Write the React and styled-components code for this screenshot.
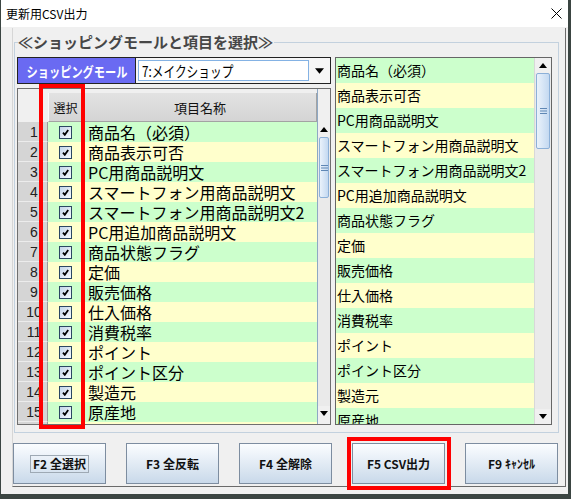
import React from 'react';
import styled, { createGlobalStyle } from 'styled-components';

const FONT = `"Noto Sans CJK JP", "Noto Sans", sans-serif`;

const Global = createGlobalStyle`
  html, body { margin: 0; padding: 0; }
  body {
    width: 571px; height: 499px; overflow: hidden;
    background: #3b4542;
    font-family: ${FONT};
  }
`;

const Window = styled.div`
  margin-left: 1px;
  width: 567px;
  height: 494px;
  display: flex;
  flex-direction: column;
  background: #f0f0f0;
`;

const TitleBar = styled.div`
  flex: none;
  height: 27px;
  background: #fff;
  display: flex;
  align-items: center;
  justify-content: space-between;
  padding: 0 6px 0 5px;
  box-sizing: border-box;
`;

const Title = styled.span`
  font-size: 12px;
  line-height: 14px;
  color: #000;
`;

const Body = styled.div`
  flex: 1;
  padding: 1px 0 0 11px;
  box-sizing: border-box;
`;

const Panel = styled.div`
  width: 554px;
  height: 459px;
  box-sizing: border-box;
  border-left: 1px solid #d6d6d6;
  border-right: 1px solid #6a6a6a;
  border-bottom: 1px solid #6a6a6a;
  padding-top: 14px;
  display: flex;
  flex-direction: column;
`;

const GroupBox = styled.div`
  position: relative;
  margin-left: 1px;
  width: 545px;
  height: 391px;
  box-sizing: border-box;
  border: 1px solid #c3d1de;
  padding: 14px 6px 7px 2px;
  display: flex;
  gap: 4px;
`;

const Legend = styled.div`
  position: absolute;
  top: -9px;
  left: 3px;
  padding: 0 1px 0 0;
  background: #f0f0f0;
  font-size: 15px;
  line-height: 16px;
  font-weight: 700;
  color: #474747;
  white-space: nowrap;
`;

const LeftPane = styled.div`
  position: relative;
  width: 314px;
  display: flex;
  flex-direction: column;
  gap: 4px;
`;

const TopRow = styled.div`
  height: 27px;
  display: flex;
`;

const Squeeze = styled.span`
  display: inline-block;
  white-space: nowrap;
  transform: scaleX(${p => p.$sx});
  transform-origin: ${p => p.$origin || 'center'};
`;

const MallLabel = styled.div`
  width: 118px;
  box-sizing: border-box;
  border: 1px solid #222;
  border-right: none;
  background: #6a6af2;
  color: #fff;
  font-weight: 700;
  font-size: 14px;
  display: flex;
  align-items: center;
  justify-content: center;
  white-space: nowrap;
  overflow: hidden;
`;

const Combo = styled.div`
  flex: 1;
  box-sizing: border-box;
  border: 1px solid #222;
  background: #f6f6f6;
  padding: 2px 0 2px 2px;
  display: flex;
`;

const ComboField = styled.div`
  flex: 1;
  border: 1px solid #84b2e4;
  background: #fff;
  display: flex;
  align-items: center;
  padding-left: 3px;
  font-size: 15px;
  color: #000;
  white-space: nowrap;
  overflow: hidden;
`;

const ComboButton = styled.div`
  width: 21px;
  display: flex;
  align-items: center;
  justify-content: center;
`;

const Grid = styled.div`
  height: 337px;
  box-sizing: border-box;
  border: 1px solid #6f6f6f;
  background: #f0f0f0;
  display: flex;
  overflow: hidden;
`;

const GridTable = styled.div`
  flex: 1;
  display: flex;
  flex-direction: column;
  min-width: 0;
`;

const HeaderRow = styled.div`
  margin-top: 4px;
  height: 29px;
  flex: none;
  display: flex;
`;

const Corner = styled.div`
  width: 30px;
`;

const HeadCell = styled.div`
  width: ${p => (p.$grow ? 'auto' : `${p.$w}px`)};
  flex: ${p => (p.$grow ? 1 : 'none')};
  box-sizing: border-box;
  background: linear-gradient(#e2e2e2, #d4d4d4);
  border-left: 1px solid #fafafa;
  border-right: 1px solid #a3a3a3;
  border-bottom: 1px solid #a3a3a3;
  font-size: ${p => p.$fs}px;
  color: #111;
  display: flex;
  align-items: center;
  justify-content: center;
`;

const Row = styled.div`
  height: 20px;
  flex: none;
  display: flex;
`;

const RowHead = styled.div`
  width: 30px;
  box-sizing: border-box;
  background: #d5d5d5;
  border-bottom: 1px solid #ececec;
  border-right: 1px solid #9a9a9a;
  font-family: "Liberation Sans", sans-serif;
  font-size: 14px;
  color: #222;
  display: flex;
  align-items: center;
  justify-content: center;
  padding-left: 3px;
`;

const CheckCell = styled.div`
  width: 35px;
  background: ${p => p.$bg};
  display: flex;
  align-items: center;
  justify-content: center;
`;

const NameCell = styled.div`
  flex: 1;
  min-width: 0;
  background: ${p => p.$bg};
  padding-left: 5px;
  font-size: 16px;
  line-height: 20px;
  color: #000;
  white-space: nowrap;
  overflow: hidden;
`;

const Box = styled.span`
  width: 13px;
  height: 13px;
  box-sizing: border-box;
  border: 1px solid #2b4663;
  background: linear-gradient(135deg, #c3d5ea, #f7fafd);
  display: flex;
  align-items: center;
  justify-content: center;
`;

const VScroll = styled.div`
  width: ${p => p.$w}px;
  flex: none;
  box-sizing: border-box;
  border-left: 1px solid ${p => p.$line};
  display: flex;
  flex-direction: column;
  background: #eaeaea;
`;

const ScrollSpacer = styled.div`
  height: ${p => p.$h}px;
  background: #f0f0f0;
  flex: none;
`;

const ScrollBtn = styled.div`
  height: 15px;
  flex: none;
  display: flex;
  align-items: center;
  justify-content: center;
  background: #f0f0f0;
`;

const Thumb = styled.div`
  height: ${p => p.$h}px;
  flex: none;
  box-sizing: border-box;
  margin: 0 1px;
  border: 1px solid #8cb0d8;
  border-radius: 2px;
  background: linear-gradient(90deg, #eaf2fb, #c4d9f1);
  display: flex;
  align-items: center;
  justify-content: center;
`;

const Track = styled.div`
  flex: 1;
`;

const RightList = styled.div`
  width: 217px;
  height: 368px;
  box-sizing: border-box;
  border: 1px solid #666;
  display: flex;
  background: #fff;
`;

const ListItems = styled.div`
  flex: 1;
  overflow: hidden;
  min-width: 0;
`;

const ListItem = styled.div`
  height: 25px;
  background: ${p => p.$bg};
  font-size: 14px;
  line-height: 25px;
  padding-left: 1px;
  color: #000;
  white-space: nowrap;
`;

const RedFrame = styled.div`
  position: absolute;
  left: 22px;
  top: 27px;
  width: 46px;
  height: 345px;
  box-sizing: border-box;
  border: 4px solid #ff0000;
  pointer-events: none;
`;

const ButtonRow = styled.div`
  margin-top: 10px;
  display: flex;
  gap: 20px;
`;

const Highlight = styled.div`
  position: relative;
  &::after {
    content: '';
    position: absolute;
    top: -6px;
    left: -5px;
    right: -6px;
    bottom: -6px;
    border: 4px solid #ff0000;
    pointer-events: none;
  }
`;

const Button = styled.button`
  width: 93px;
  height: 41px;
  box-sizing: border-box;
  border: 1px solid #7d8da0;
  border-radius: 0;
  background: linear-gradient(#fbfdff, #c9d9ea);
  font-family: ${FONT};
  font-weight: 700;
  font-size: 12px;
  color: #111;
  padding: 0;
  display: flex;
  align-items: center;
  justify-content: center;
  white-space: nowrap;
`;

const Focus = styled.span`
  border: 1px solid #9ea9b4;
  padding: 0 2px;
  line-height: 16px;
`;

const GREEN = '#ccffcc';
const YELLOW = '#ffffcc';

const items = [
  '商品名（必須）',
  '商品表示可否',
  'PC用商品説明文',
  'スマートフォン用商品説明文',
  'スマートフォン用商品説明文2',
  'PC用追加商品説明文',
  '商品状態フラグ',
  '定価',
  '販売価格',
  '仕入価格',
  '消費税率',
  'ポイント',
  'ポイント区分',
  '製造元',
  '原産地',
  '原産地表示',
];

const Up = () => (
  <svg width="8" height="5" viewBox="0 0 8 5"><path d="M0 5 L4 0 L8 5 Z" fill="#000" /></svg>
);
const Down = ({ w = 8, h = 5 }) => (
  <svg width={w} height={h} viewBox="0 0 8 5"><path d="M0 0 L8 0 L4 5 Z" fill="#000" /></svg>
);
const Grip = () => (
  <svg width="7" height="6" viewBox="0 0 7 6">
    <path d="M0 0.5 H7 M0 3 H7 M0 5.5 H7" stroke="#5f87b5" strokeWidth="1" />
  </svg>
);

const Check = () => (
  <Box>
    <svg width="7" height="7" viewBox="0 0 7 7">
      <path d="M1 3.6 L2.8 5.8 L6.2 1" fill="none" stroke="#000" strokeWidth="1.8" />
    </svg>
  </Box>
);

export default function App() {
  return (
    <>
      <Global />
      <Window>
        <TitleBar>
          <Title>更新用CSV出力</Title>
          <svg width="11" height="11" viewBox="0 0 11 11">
            <path d="M0.5 0.5 L10.5 10.5 M10.5 0.5 L0.5 10.5" stroke="#000" strokeWidth="1" />
          </svg>
        </TitleBar>
        <Body>
          <Panel>
            <GroupBox>
              <Legend>≪ショッピングモールと項目を選択≫</Legend>
              <LeftPane>
                <TopRow>
                  <MallLabel><Squeeze $sx={0.8}>ショッピングモール</Squeeze></MallLabel>
                  <Combo>
                    <ComboField><Squeeze $sx={0.78} $origin="left">7:メイクショップ</Squeeze></ComboField>
                    <ComboButton><Down w={9} h={6} /></ComboButton>
                  </Combo>
                </TopRow>
                <Grid>
                  <GridTable>
                    <HeaderRow>
                      <Corner />
                      <HeadCell $w={35} $fs={12}>選択</HeadCell>
                      <HeadCell $grow $fs={13}>項目名称</HeadCell>
                    </HeaderRow>
                    {items.map((it, i) => {
                      const bg = i % 2 === 0 ? GREEN : YELLOW;
                      return (
                        <Row key={i}>
                          <RowHead>{i + 1}</RowHead>
                          <CheckCell $bg={bg}><Check /></CheckCell>
                          <NameCell $bg={bg}>{it}</NameCell>
                        </Row>
                      );
                    })}
                  </GridTable>
                  <VScroll $w={13} $line="#8ea8c4">
                    <ScrollSpacer $h={33} />
                    <ScrollBtn><Up /></ScrollBtn>
                    <Thumb $h={61}><Grip /></Thumb>
                    <Track />
                    <ScrollBtn><Down /></ScrollBtn>
                    <ScrollSpacer $h={3} />
                  </VScroll>
                </Grid>
                <RedFrame />
              </LeftPane>
              <RightList>
                <ListItems>
                  {items.slice(0, 15).map((it, i) => (
                    <ListItem key={i} $bg={i % 2 === 0 ? GREEN : YELLOW}>{it}</ListItem>
                  ))}
                </ListItems>
                <VScroll $w={17} $line="#d8d8d8">
                  <ScrollBtn><Up /></ScrollBtn>
                  <Thumb $h={76}><Grip /></Thumb>
                  <Track />
                  <ScrollBtn><Down /></ScrollBtn>
                </VScroll>
              </RightList>
            </GroupBox>
            <ButtonRow>
              <Button><Focus>F2 全選択</Focus></Button>
              <Button>F3 全反転</Button>
              <Button>F4 全解除</Button>
              <Highlight><Button>F5 CSV出力</Button></Highlight>
              <Button>F9 ｷｬﾝｾﾙ</Button>
            </ButtonRow>
          </Panel>
        </Body>
      </Window>
    </>
  );
}
